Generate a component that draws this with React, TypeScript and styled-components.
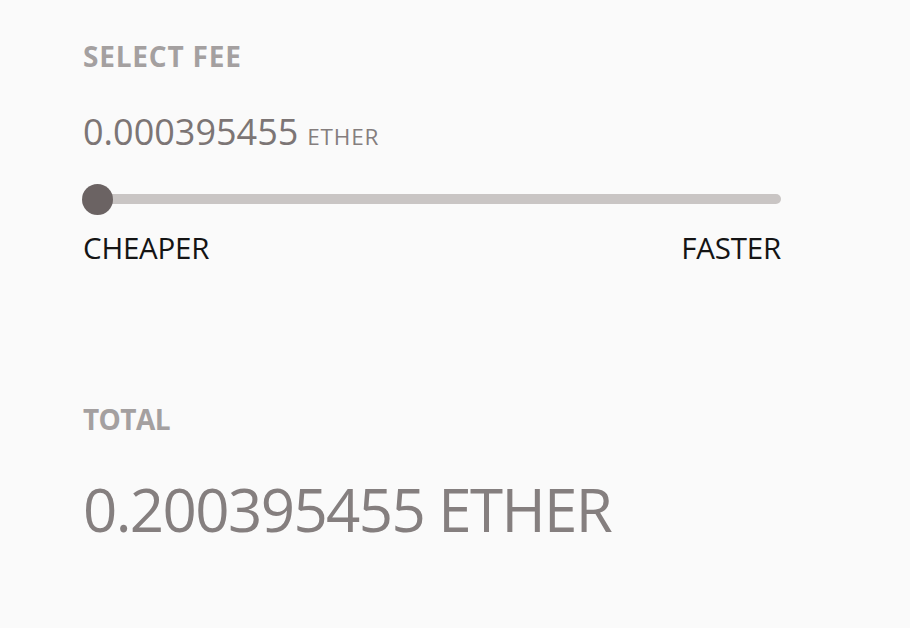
import React from "react";
import styled, { createGlobalStyle } from "styled-components";

const Global = createGlobalStyle`
  html, body {
    margin: 0;
    padding: 0;
    background: #fafafa;
  }
  body {
    font-family: "Open Sans", "Noto Sans", sans-serif;
  }
`;

const Page = styled.div`
  width: 910px;
  height: 628px;
  box-sizing: border-box;
  padding: 42px 0 0 83px;
  background: #fafafa;
`;

const Column = styled.div`
  width: 698px;
  display: flex;
  flex-direction: column;
`;

const Label = styled.div<{ $mt?: number; $tracking?: number }>`
  margin-top: ${(p) => p.$mt ?? 0}px;
  font-size: 28px;
  line-height: 28px;
  font-weight: 700;
  letter-spacing: ${(p) => p.$tracking ?? 0}px;
  color: #a4a0a0;
`;

const FeeValue = styled.div`
  margin-top: 44px;
  font-size: 36px;
  line-height: 1;
  letter-spacing: 0;
  color: #7c7575;
`;

const Unit = styled.span`
  font-size: 22.5px;
  letter-spacing: 0.8px;
  margin-left: 9px;
  color: #857e7e;
`;

const Slider = styled.div`
  margin-top: 34px;
  height: 30px;
  position: relative;
  display: flex;
  align-items: center;
`;

const Track = styled.div`
  width: 100%;
  height: 10px;
  border-radius: 5px;
  background: #c9c5c4;
`;

const Thumb = styled.div`
  position: absolute;
  left: -1px;
  top: -0.5px;
  width: 31px;
  height: 31px;
  border-radius: 50%;
  background: #6b6363;
`;

const RangeLabels = styled.div`
  margin-top: 18.6px;
  display: flex;
  justify-content: space-between;
  font-size: 29.5px;
  line-height: 30px;
  letter-spacing: -0.2px;
  color: #141414;
`;

const TotalValue = styled.div`
  margin-top: 45.7px;
  font-size: 60px;
  line-height: 60px;
  letter-spacing: -1.6px;
  color: #857f7f;
`;

export default function App() {
  return (
    <>
      <Global />
      <Page>
        <Column>
          <Label $tracking={0.8}>SELECT FEE</Label>
          <FeeValue>
            0.000395455<Unit>ETHER</Unit>
          </FeeValue>
          <Slider>
            <Track />
            <Thumb />
          </Slider>
          <RangeLabels>
            <span>CHEAPER</span>
            <span>FASTER</span>
          </RangeLabels>
          <Label $mt={142.4} $tracking={-0.6}>
            TOTAL
          </Label>
          <TotalValue>0.200395455 ETHER</TotalValue>
        </Column>
      </Page>
    </>
  );
}
